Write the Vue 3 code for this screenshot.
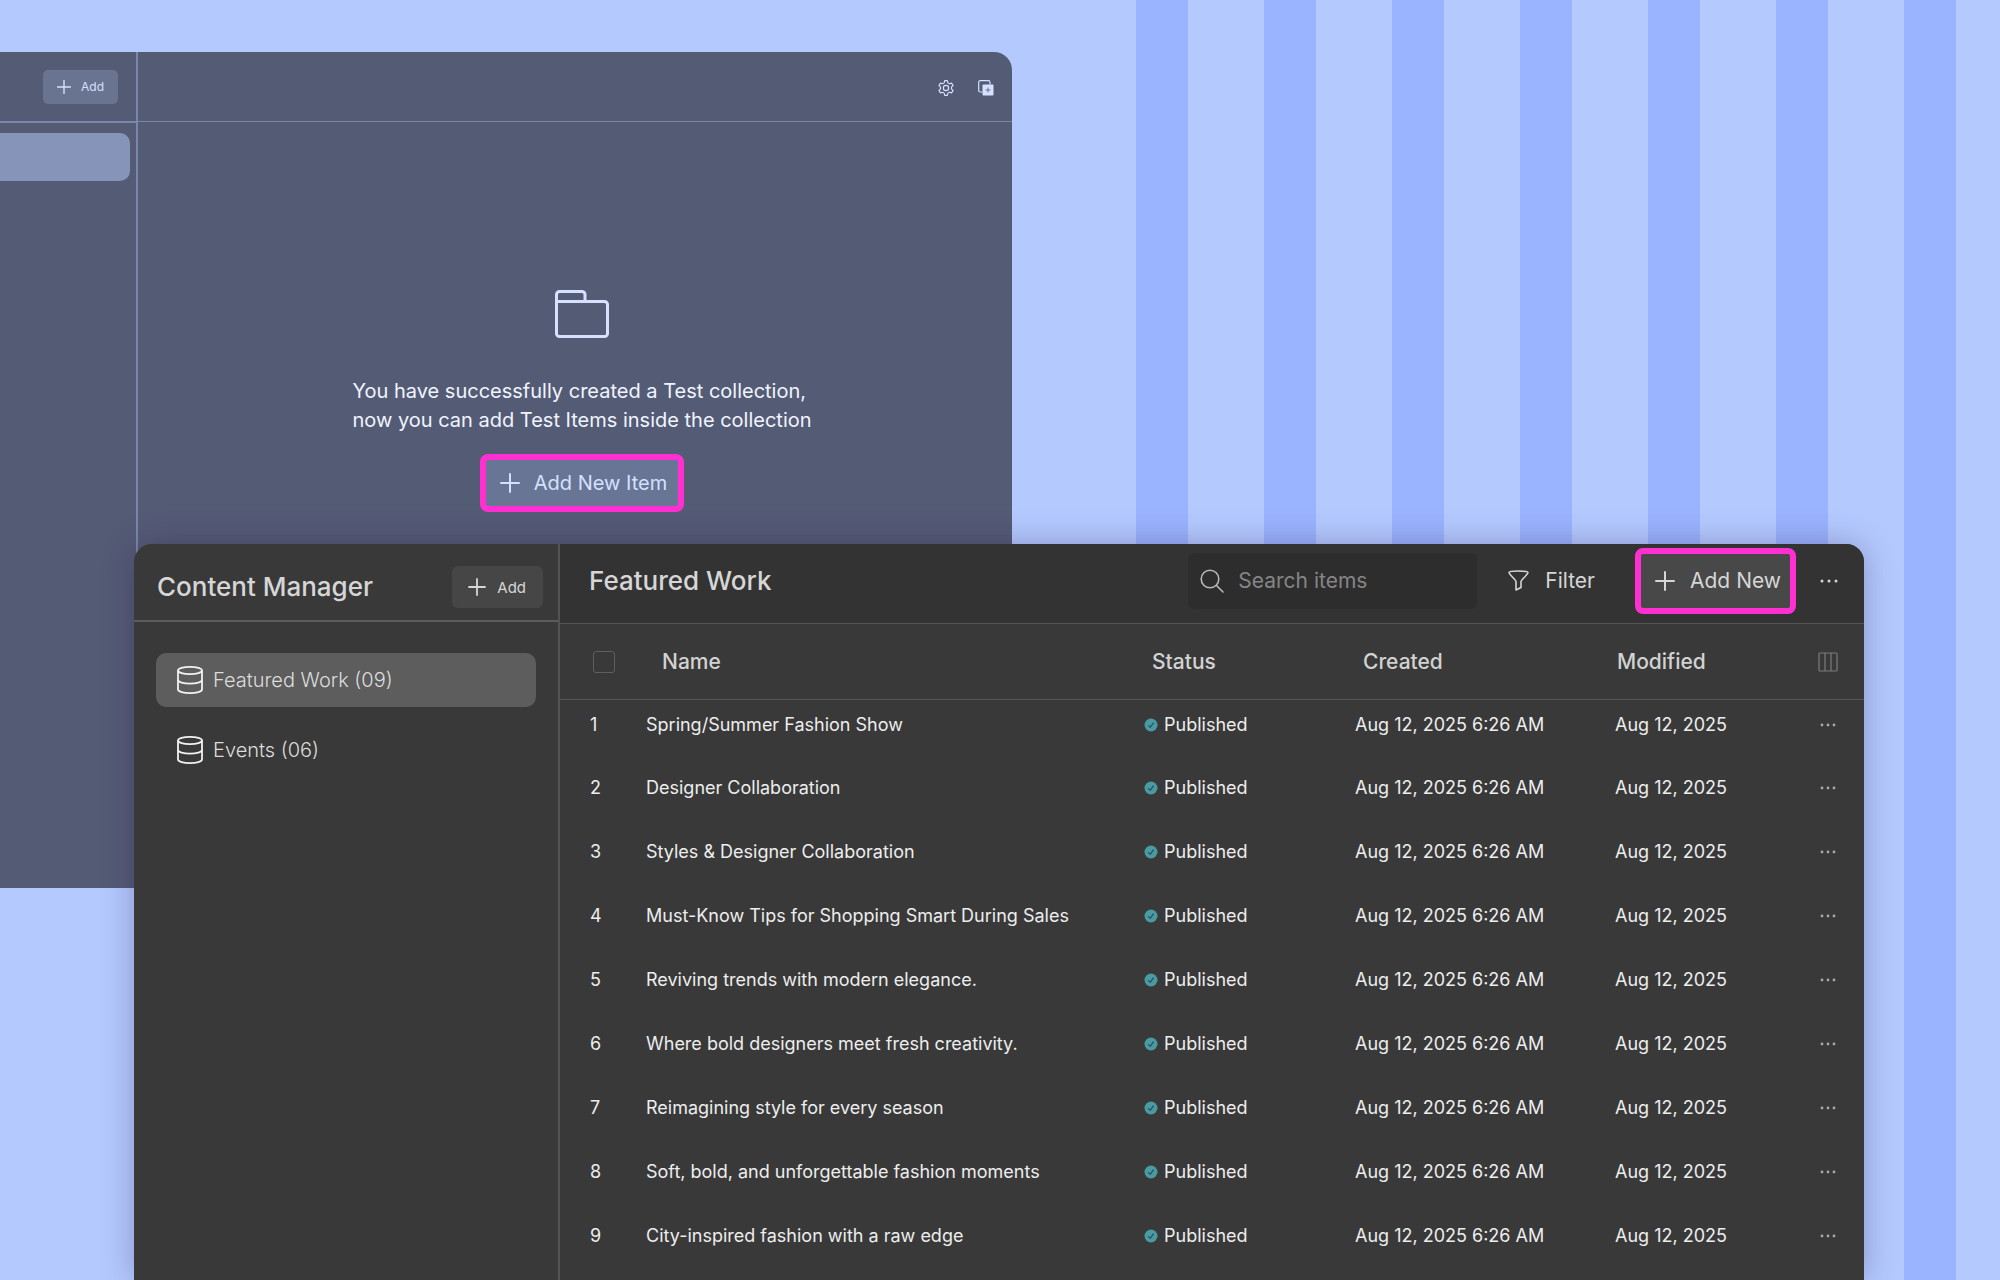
<script setup>
const collections = [
  { name: 'Featured Work (09)', active: true },
  { name: 'Events (06)', active: false },
]

const items = [
  'Spring/Summer Fashion Show',
  'Designer Collaboration',
  'Styles & Designer Collaboration',
  'Must-Know Tips for Shopping Smart During Sales',
  'Reviving trends with modern elegance.',
  'Where bold designers meet fresh creativity.',
  'Reimagining style for every season',
  'Soft, bold, and unforgettable fashion moments',
  'City-inspired fashion with a raw edge',
].map((name, i) => ({
  id: i + 1,
  name,
  status: 'Published',
  created: 'Aug 12, 2025 6:26 AM',
  modified: 'Aug 12, 2025',
}))
</script>

<template>
  <div class="stage">
    <section class="window back" aria-label="Test collection">
      <aside class="back-side">
        <header class="back-bar back-side-bar">
          <button type="button" class="back-add">
            <svg width="14" height="14" viewBox="0 0 14 14" aria-hidden="true">
              <path d="M7 0.5V13.5M0.5 7H13.5" fill="none" stroke="currentColor" stroke-width="1.4" stroke-linecap="round" />
            </svg>
            Add
          </button>
        </header>
        <div class="back-selected"></div>
      </aside>
      <div class="back-main">
        <header class="back-bar back-main-bar">
          <button type="button" class="icon-button" aria-label="Settings">
            <svg width="16" height="16" viewBox="0 0 24 24" fill="none" stroke="currentColor" stroke-width="1.7" stroke-linejoin="round" aria-hidden="true">
              <path d="M10 1L14 1L14.8 4.3L17.2 5.7L20.4 4.7L22.6 8.3L20.2 10.6V13.4L22.6 15.7L20.4 19.3L17.2 18.3L14.8 19.7L14 23H10L9.2 19.7L6.8 18.3L3.6 19.3L1.4 15.7L3.8 13.4V10.6L1.4 8.3L3.6 4.7L6.8 5.7L9.2 4.3Z" />
              <circle cx="12" cy="12" r="4" />
            </svg>
          </button>
          <button type="button" class="icon-button" aria-label="Duplicate">
            <svg width="16" height="16" viewBox="0 0 16 16" aria-hidden="true">
              <path d="M4.5 12H2.2A1.5 1.5 0 0 1 0.7 10.5V2.2A1.5 1.5 0 0 1 2.2 0.7H10.5A1.5 1.5 0 0 1 12 2.2V4.5" fill="none" stroke="currentColor" stroke-width="1.2" />
              <rect x="4.5" y="4.5" width="11" height="11" rx="1" fill="currentColor" />
              <path d="M10 7.5V12.5M7.5 10H12.5" stroke="#545b75" stroke-width="0.8" />
            </svg>
          </button>
        </header>
        <div class="empty">
          <svg width="54" height="48" viewBox="0 0 54 48" fill="none" stroke="currentColor" stroke-width="3" stroke-linejoin="round" aria-hidden="true">
            <path d="M1.5 11.5V4.5a3 3 0 0 1 3-3H27a3 3 0 0 1 3 3V11.5" />
            <path d="M1.5 11.5H49.5a3 3 0 0 1 3 3V43.5a3 3 0 0 1-3 3H4.5a3 3 0 0 1-3-3Z" />
          </svg>
          <p class="empty-text">You have successfully created a Test collection,<br />now you can add Test Items inside the collection</p>
          <button type="button" class="highlight empty-add">
            <svg width="20" height="20" viewBox="0 0 20 20" aria-hidden="true">
              <path d="M10 1V19M1 10H19" fill="none" stroke="currentColor" stroke-width="2" stroke-linecap="round" />
            </svg>
            Add New Item
          </button>
        </div>
      </div>
    </section>

    <section class="window front" aria-label="Content Manager">
      <aside class="side">
        <header class="side-bar">
          <h1 class="side-title">Content Manager</h1>
          <button type="button" class="side-add">
            <svg width="18" height="18" viewBox="0 0 18 18" aria-hidden="true">
              <path d="M9 1V17M1 9H17" fill="none" stroke="currentColor" stroke-width="1.8" stroke-linecap="round" />
            </svg>
            Add
          </button>
        </header>
        <nav class="collections">
          <a
            v-for="c in collections"
            :key="c.name"
            href="#"
            class="collection"
            :class="{ active: c.active }"
          >
            <svg width="26" height="28" viewBox="0 0 26 28" fill="none" stroke="currentColor" stroke-width="1.8" aria-hidden="true">
              <ellipse cx="13" cy="4.5" rx="12" ry="3.6" />
              <path d="M1 4.5V23.5C1 25.5 6.4 27.1 13 27.1S25 25.5 25 23.5V4.5" />
              <path d="M1 14C1 16 6.4 17.6 13 17.6S25 16 25 14" />
            </svg>
            {{ c.name }}
          </a>
        </nav>
      </aside>

      <div class="main">
        <header class="toolbar">
          <h2 class="main-title">Featured Work</h2>
          <label class="search">
            <svg width="24" height="24" viewBox="0 0 24 24" fill="none" stroke="currentColor" stroke-width="1.6" stroke-linecap="round" aria-hidden="true">
              <circle cx="10" cy="10" r="8.8" />
              <path d="M16.5 16.5L23 23" />
            </svg>
            <input type="search" placeholder="Search items" aria-label="Search items" />
          </label>
          <button type="button" class="filter">
            <svg width="21" height="21" viewBox="0 0 21 21" fill="none" stroke="currentColor" stroke-width="1.6" stroke-linejoin="round" aria-hidden="true">
              <path d="M1 2.6C1 0.5 20 0.5 20 2.6C20 4.5 13 10 13 11.5V17.5L8 20V11.5C8 10 1 4.5 1 2.6Z" />
            </svg>
            Filter
          </button>
          <button type="button" class="highlight main-add">
            <svg width="20" height="20" viewBox="0 0 20 20" aria-hidden="true">
              <path d="M10 1V19M1 10H19" fill="none" stroke="currentColor" stroke-width="2" stroke-linecap="round" />
            </svg>
            Add New
          </button>
          <button type="button" class="icon-button" aria-label="More">
            <svg width="18" height="4" viewBox="0 0 18 4" fill="currentColor" aria-hidden="true">
              <circle cx="2" cy="2" r="1.5" /><circle cx="9" cy="2" r="1.5" /><circle cx="16" cy="2" r="1.5" />
            </svg>
          </button>
        </header>

        <table class="items">
          <colgroup>
            <col class="col-num" />
            <col />
            <col class="col-status" />
            <col class="col-created" />
            <col class="col-modified" />
            <col class="col-actions" />
          </colgroup>
          <thead>
            <tr>
              <th scope="col" class="num"><input type="checkbox" class="check" aria-label="Select all" /></th>
              <th scope="col" class="name">Name</th>
              <th scope="col">Status</th>
              <th scope="col">Created</th>
              <th scope="col" class="modified">Modified</th>
              <th scope="col" class="actions">
                <button type="button" class="icon-button columns" aria-label="Columns">
                  <svg width="20" height="20" viewBox="0 0 20 20" fill="none" stroke="currentColor" stroke-width="1.2" aria-hidden="true">
                    <rect x="1" y="1" width="18" height="18" rx="1" />
                    <path d="M7 1V19M13 1V19" />
                  </svg>
                </button>
              </th>
            </tr>
          </thead>
          <tbody>
            <tr v-for="item in items" :key="item.id">
              <td class="num">{{ item.id }}</td>
              <td>{{ item.name }}</td>
              <td>
                <span class="status">
                  <svg width="14" height="14" viewBox="0 0 14 14" aria-hidden="true">
                    <circle cx="7" cy="7" r="6.5" fill="#489ba4" />
                    <path d="M4.3 7.4L6.2 9.3L9.6 4.6" fill="none" stroke="#2f4d52" stroke-width="1.2" />
                  </svg>
                  {{ item.status }}
                </span>
              </td>
              <td>{{ item.created }}</td>
              <td>{{ item.modified }}</td>
              <td>
                <button type="button" class="icon-button row-more" :aria-label="'Actions for ' + item.name">
                  <svg width="16" height="4" viewBox="0 0 16 4" fill="currentColor" aria-hidden="true">
                    <circle cx="2" cy="2" r="1.4" /><circle cx="8" cy="2" r="1.4" /><circle cx="14" cy="2" r="1.4" />
                  </svg>
                </button>
              </td>
            </tr>
          </tbody>
        </table>
      </div>
    </section>
  </div>
</template>

<style>
body {
  margin: 0;
}
</style>

<style scoped>
.stage,
.stage * {
  box-sizing: border-box;
}

/* Both windows share one grid cell, so the front one overlaps the back one. */
.stage {
  display: grid;
  grid-template: 1fr / 1fr;
  min-height: 100vh;
  padding-top: 52px;
  overflow: hidden;
  font-family: Inter, "Liberation Sans", sans-serif;
  background:
    linear-gradient(#b4caff, #b4caff) 0 0 / 1136px 100% no-repeat,
    linear-gradient(90deg, #9ab4ff 52px, #b4caff 52px) 1136px 0 / 128px 100%;
}

.window {
  grid-area: 1 / 1;
  display: flex;
  min-width: 0;
}

button {
  display: inline-flex;
  align-items: center;
  flex: none;
  margin: 0;
  padding: 0;
  border: 0;
  background: none;
  color: inherit;
  font: inherit;
  white-space: nowrap;
}

svg {
  display: block;
  flex: none;
}

.highlight {
  border: 6px solid #ff2fd2;
  border-radius: 8px;
}

/* Back window */
.back {
  align-self: start;
  width: 1012px;
  max-width: 100%;
  min-height: 836px;
  border-radius: 0 18px 0 0;
  background: #545b75;
  color: #d6e0ff;
}

.back-side {
  flex: none;
  width: 138px;
  border-right: 2px solid #7b86aa;
}

.back-bar {
  display: flex;
  align-items: center;
  justify-content: flex-end;
}

.back-side-bar {
  height: 71px;
  padding-right: 18px;
  border-bottom: 2px solid #7b86aa;
}

.back-add {
  height: 34px;
  padding: 0 14px;
  gap: 10px;
  border-radius: 5px;
  background: #697491;
  font-size: 12px;
}

.back-selected {
  height: 48px;
  margin: 10px 6px 0 0;
  border-radius: 0 10px 10px 0;
  background: #8794ba;
}

.back-main {
  flex: 1;
}

.back-main-bar {
  height: 70px;
  padding: 3px 18px 0 0;
  gap: 24px;
  border-bottom: 1px solid #7b86aa;
}

.empty {
  display: flex;
  flex-direction: column;
  align-items: center;
  padding: 168px 0 0 14px;
}

.empty-text {
  margin: 39px 0 19px;
  color: #f0f4ff;
  font-size: 20px;
  line-height: 29px;
}

.empty-add {
  height: 58px;
  padding: 0 11px 0 14px;
  gap: 14px;
  background: #697594;
  font-size: 20px;
}

/* Front window */
.front {
  margin: 492px 136px 0 134px;
  border-radius: 18px 18px 0 0;
  overflow: hidden;
  background: #393939;
  color: #d6d6d6;
  box-shadow: 0 0 32px rgba(40, 20, 70, 0.3);
}

.side {
  flex: none;
  width: 426px;
  border-right: 2px solid #545454;
}

.side-bar {
  display: flex;
  align-items: center;
  justify-content: space-between;
  height: 78px;
  padding: 10px 15px 0 23px;
  border-bottom: 2px solid #5c5c5c;
}

.side-title,
.main-title {
  margin: 0;
  font-size: 26px;
  font-weight: 500;
  line-height: 32px;
  white-space: nowrap;
}

.side-add {
  height: 42px;
  padding: 0 17px 0 16px;
  gap: 11px;
  border-radius: 6px;
  background: #464646;
  font-size: 15px;
}

.collections {
  display: flex;
  flex-direction: column;
  gap: 16px;
  padding: 31px 22px 0;
}

.collection {
  display: flex;
  align-items: center;
  height: 54px;
  padding-left: 21px;
  gap: 10px;
  border-radius: 10px;
  color: #dcdcdc;
  font-size: 20px;
  font-weight: 300;
  text-decoration: none;
}

.collection svg {
  color: #f2f2f2;
}

.collection.active {
  background: #5d5d5d;
}

.main {
  flex: 1;
  min-width: 0;
}

.toolbar {
  display: flex;
  align-items: center;
  height: 80px;
  padding: 0 26px 6px 29px;
  border-bottom: 1px solid #555555;
  background: #333333;
  font-size: 21px;
}

.search {
  display: flex;
  align-items: center;
  width: 289px;
  height: 56px;
  margin: 0 31px 0 auto;
  padding: 0 12px;
  gap: 14px;
  border-radius: 6px;
  background: #2d2d2d;
  color: #b8b8b8;
}

.search input {
  flex: 1;
  min-width: 0;
  padding: 0;
  border: 0;
  outline: 0;
  background: none;
  color: inherit;
  font: inherit;
}

.search input::placeholder {
  color: #858585;
  opacity: 1;
}

.filter {
  margin-right: 40px;
  gap: 16px;
}

.main-add {
  height: 66px;
  margin-right: 24px;
  padding: 0 9px 0 14px;
  gap: 15px;
  background: #484848;
}

.items {
  width: 100%;
  table-layout: fixed;
  border-collapse: collapse;
  color: #ededed;
  font-size: 18px;
  line-height: 24px;
}

.col-num {
  width: 86px;
}

.col-status {
  width: 211px;
}

.col-created {
  width: 260px;
}

.col-modified {
  width: 203px;
}

.col-actions {
  width: 46px;
}

th,
td {
  padding: 0;
  text-align: left;
  white-space: nowrap;
}

thead tr {
  height: 75px;
  border-bottom: 1px solid #555555;
}

th {
  padding: 2px 0 0 8px;
  color: #d2d2d2;
  font-size: 21px;
  font-weight: 500;
}

th.name {
  padding-left: 16px;
}

th.modified {
  padding-left: 2px;
}

th.actions {
  padding-left: 0;
}

th.num {
  padding-left: 33px;
}

td {
  height: 64px;
  padding-top: 13px;
  vertical-align: top;
}

td.num {
  padding-left: 30px;
}

.check {
  display: block;
  width: 22px;
  height: 22px;
  margin: 0;
  appearance: none;
  border: 1px solid #5e5e5e;
  border-radius: 3px;
}

.columns {
  display: flex;
  color: #7c7c7c;
}

.status {
  display: flex;
  align-items: center;
  gap: 6px;
}

.row-more {
  display: flex;
  height: 24px;
  padding-left: 2px;
  color: #a8a8a8;
}
</style>
